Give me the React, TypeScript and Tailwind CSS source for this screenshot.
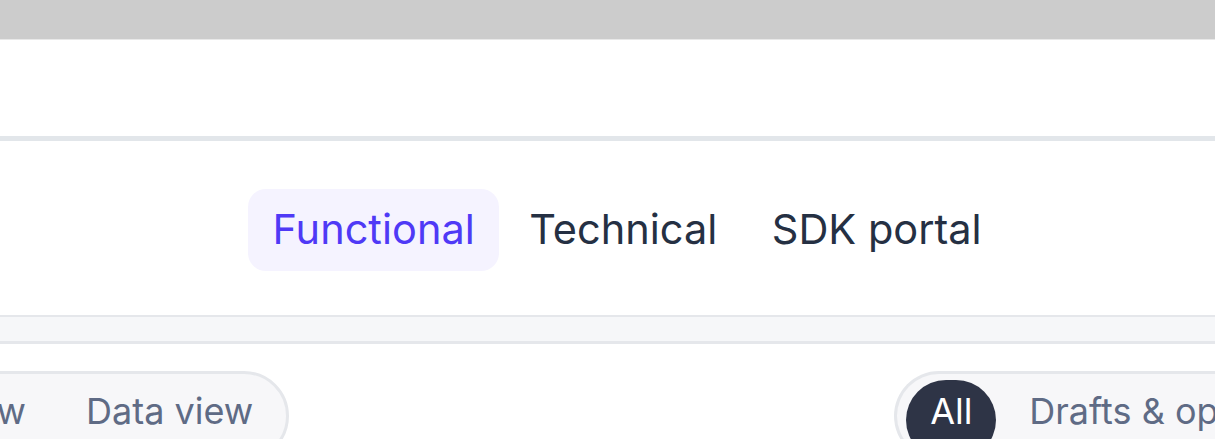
import React from "react";

const TABS = ["Functional", "Technical", "SDK portal"];

export default function App() {
  return (
    <div className="w-[1215px] h-[439px] overflow-hidden bg-white" style={{ fontFamily: "Inter, 'Noto Sans', sans-serif" }}>
      {/* browser chrome strip */}
      <div className="h-[40px] bg-[#cccccc] border-b border-[#e8e8e8]" />

      {/* header */}
      <div className="h-[101px] bg-white border-b-[5px] border-[#e2e6ea]" />

      {/* doc tabs */}
      <div className="h-[176px] flex items-start pt-[48px] pl-[248px] gap-[5.5px] border-b-[2px] border-[#e5e7eb]">
        {TABS.map((t, i) => (
          <div
            key={t}
            className={
              i === 0
                ? "h-[82px] px-[24.5px] flex items-center rounded-[18px] bg-[#f5f3ff] text-[#4f39f6] text-[41.5px] leading-none"
                : "h-[82px] px-[24.5px] flex items-center rounded-[18px] text-[#253043] text-[41.5px] leading-none"
            }
          >
            {t}
          </div>
        ))}
      </div>

      {/* strip */}
      <div className="h-[27px] bg-[#f6f7f9] border-b-[3px] border-[#e5e7eb]" />

      {/* view + status toggles */}
      <div className="flex items-start pt-[27px]">
        <div className="shrink-0 -ml-[180px] flex items-start h-[90px] pt-[19px] pl-[12px] pr-[33px] rounded-full border-[3px] border-[#e5e7eb] bg-[#f7f7f9] text-[36px] leading-none text-[#5f6b85] gap-[60px]">
          <span className="pl-[26px]">Tree view</span>
          <span>Data view</span>
        </div>
        <div className="shrink-0 ml-[605px] flex items-start h-[90px] pl-[9px] pt-[6px] rounded-l-full border-[3px] border-r-0 border-[#e5e7eb] bg-[#f7f7f9] text-[36px] leading-none gap-[33px]">
          <span className="h-[80px] w-[90px] flex items-start justify-center pt-[13px] rounded-full bg-[#2e3446] text-white">All</span>
          <span className="pt-[13px] text-[#5f6b85] whitespace-nowrap">Drafts &amp; open</span>
        </div>
      </div>
    </div>
  );
}
